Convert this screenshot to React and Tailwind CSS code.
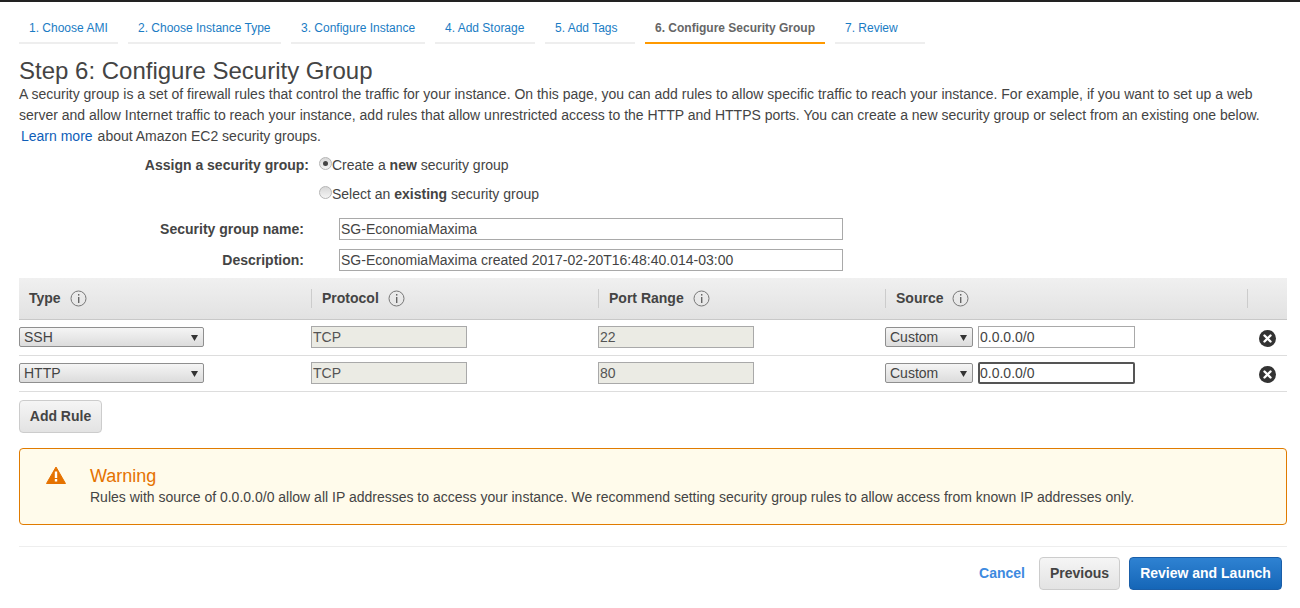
import React from 'react';

const steps = [
  { label: '1. Choose AMI', width: 'w-[99px]' },
  { label: '2. Choose Instance Type', width: 'w-[153px]' },
  { label: '3. Configure Instance', width: 'w-[134px]' },
  { label: '4. Add Storage', width: 'w-[100px]' },
  { label: '5. Add Tags', width: 'w-[90px]' },
  { label: '6. Configure Security Group', width: 'w-[180px]', active: true },
  { label: '7. Review', width: 'w-[90px]' },
];

const columns = [
  { label: 'Type', width: 'w-[292px]' },
  { label: 'Protocol', width: 'w-[287px]' },
  { label: 'Port Range', width: 'w-[287px]' },
  { label: 'Source', width: 'w-[362px]' },
];

const rules = [
  { type: 'SSH', port: '22' },
  { type: 'HTTP', port: '80', focused: true },
];

const InfoIcon = () => (
  <svg width="17" height="17" viewBox="0 0 17 17" className="shrink-0">
    <circle cx="8.5" cy="8.5" r="7.5" fill="none" stroke="#777" strokeWidth="1" />
    <rect x="8" y="4" width="1.4" height="1.6" fill="#666" />
    <rect x="8" y="7" width="1.4" height="6" fill="#666" />
  </svg>
);

const Arrow = () => (
  <svg width="7" height="6" viewBox="0 0 7 6" className="shrink-0">
    <path d="M0 0H7L3.5 6Z" fill="#333" />
  </svg>
);

const RemoveIcon = () => (
  <svg width="17" height="17" viewBox="0 0 17 17">
    <circle cx="8.5" cy="8.5" r="8.5" fill="#333" />
    <path d="M5.5 5.5L11.5 11.5M11.5 5.5L5.5 11.5" stroke="#fff" strokeWidth="2.4" strokeLinecap="round" />
  </svg>
);

const WarningIcon = () => (
  <svg width="20" height="18" viewBox="0 0 20 18">
    <path d="M10 1L19.5 17.5H0.5Z" fill="#e57200" stroke="#e57200" strokeWidth="1" strokeLinejoin="round" />
    <rect x="8.8" y="5.5" width="2.4" height="6.5" fill="#fff" />
    <rect x="8.8" y="13" width="2.4" height="2.5" fill="#fff" />
  </svg>
);

const Radio = ({ checked }) => (
  <span className="w-[13px] h-[13px] rounded-full border border-[#b5b5b5] bg-gradient-to-b from-[#d8d8d8] to-[#f4f4f4] flex items-center justify-center shrink-0 mb-[3px]">
    {checked && <span className="w-[5px] h-[5px] rounded-full bg-[#444]"></span>}
  </span>
);

const SelectBox = ({ value, className }) => (
  <div className={`h-[20px] pt-[2px] border border-[#8f8f8f] rounded-[2px] bg-gradient-to-b from-[#f5f5f5] to-[#dcdcdc] flex items-center justify-between pl-[4px] pr-[5px] text-[14px] text-[#444] ${className}`}>
    <span>{value}</span>
    <Arrow />
  </div>
);

const ReadonlyBox = ({ value }) => (
  <div className="w-[156px] h-[22px] pt-[2px] border border-[#a9a9a9] bg-[#ebebe4] flex items-center pl-[1px] text-[14px] text-[#545454]">
    {value}
  </div>
);

const TextBox = ({ value, className }) => (
  <div className={`h-[22px] bg-white flex items-center text-[14px] text-[#444] ${className}`}>
    {value}
  </div>
);

export default function App() {
  return (
    <div className="w-[1300px] h-[608px] bg-white overflow-hidden text-[#444] font-['Liberation_Sans',Arial,sans-serif]">
      <div className="h-[2px] bg-[#222]"></div>

      <div className="flex gap-[10px] pl-[19px] pt-[16px]">
        {steps.map((step) => (
          <div
            key={step.label}
            className={`${step.width} h-[26px] pl-[10px] border-b-2 text-[12px] leading-[20px] whitespace-nowrap ${
              step.active ? 'border-[#f90] font-bold text-[#666]' : 'border-[#eee] text-[#1a7cc4]'
            }`}
          >
            {step.label}
          </div>
        ))}
      </div>

      <div className="pl-[19px] pr-[13px]">
        <h1 className="mt-[12px] text-[24px] leading-[30px] text-[#444]">Step 6: Configure Security Group</h1>
        <p className="text-[14px] leading-[21px] text-[#444] mt-[-2px]">
          A security group is a set of firewall rules that control the traffic for your instance. On this page, you can add rules to allow specific traffic to reach your instance. For example, if you want to set up a web
          <br />
          server and allow Internet traffic to reach your instance, add rules that allow unrestricted access to the HTTP and HTTPS ports. You can create a new security group or select from an existing one below.
          <br />
          <span className="text-[#0f5eb8] ml-[2px] mr-[5px]">Learn more</span>about Amazon EC2 security groups.
        </p>

        <div className="mt-[6px] text-[14px]">
          <div className="flex items-center h-[24px]">
            <div className="w-[290px] text-right font-bold">Assign a security group:</div>
            <div className="flex items-center ml-[10px]">
              <Radio checked />
              <span>Create a <b>new</b> security group</span>
            </div>
          </div>
          <div className="flex items-center h-[24px] mt-[5px]">
            <div className="w-[290px]"></div>
            <div className="flex items-center ml-[10px]">
              <Radio />
              <span>Select an <b>existing</b> security group</span>
            </div>
          </div>
          <div className="flex items-center mt-[12px] h-[22px]">
            <div className="w-[285px] text-right font-bold">Security group name:</div>
            <TextBox value="SG-EconomiaMaxima" className="border border-[#a9a9a9] w-[504px] ml-[35px] pl-[1px]" />
          </div>
          <div className="flex items-center mt-[9px] h-[22px]">
            <div className="w-[285px] text-right font-bold">Description:</div>
            <TextBox value="SG-EconomiaMaxima created 2017-02-20T16:48:40.014-03:00" className="border border-[#a9a9a9] w-[504px] ml-[35px] pl-[1px]" />
          </div>
        </div>

        <div className="mt-[7px]">
          <div className="flex items-center h-[42px] bg-gradient-to-b from-[#f0f0f0] to-[#e2e2e2] border-b border-[#c8c8c8]">
            {columns.map((col, i) => (
              <div
                key={col.label}
                className={`${col.width} h-[19px] flex items-center gap-[9px] text-[14px] font-bold ${i === 0 ? 'pl-[10px]' : 'pl-[10px] border-l border-[#ccc]'}`}
              >
                {col.label}
                <InfoIcon />
              </div>
            ))}
            <div className="h-[19px] border-l border-[#ccc]"></div>
          </div>

          {rules.map((rule) => (
            <div key={rule.type} className="flex items-center h-[36px] pb-[2px] border-b border-[#ddd]">
              <div className="w-[292px]">
                <SelectBox value={rule.type} className="w-[185px]" />
              </div>
              <div className="w-[287px]">
                <ReadonlyBox value="TCP" />
              </div>
              <div className="w-[287px]">
                <ReadonlyBox value={rule.port} />
              </div>
              <div className="flex items-center gap-[5px]">
                <SelectBox value="Custom" className="w-[88px]" />
                <TextBox
                  value="0.0.0.0/0"
                  className={`w-[157px] pt-[2px] ${rule.focused ? 'border-2 border-[#555] rounded-[2px]' : 'border border-[#a9a9a9] pl-[1px]'}`}
                />
              </div>
              <div className="ml-[124px] mt-[3px]">
                <RemoveIcon />
              </div>
            </div>
          ))}
        </div>

        <button className="block mt-[8px] w-[83px] h-[33px] rounded-[4px] border border-[#ccc] bg-gradient-to-b from-[#f5f5f5] to-[#e3e3e3] text-[14px] font-bold text-[#444]">
          Add Rule
        </button>

        <div className="mt-[15px] h-[77px] flex rounded-[4px] border border-[#e07b00] bg-[#fffbeb]">
          <div className="w-[70px] pl-[26px] pt-[17px]">
            <WarningIcon />
          </div>
          <div className="pt-[16px]">
            <div className="text-[18px] leading-[22px] text-[#e57200]">Warning</div>
            <div className="text-[14px] leading-[20px] text-[#444]">
              Rules with source of 0.0.0.0/0 allow all IP addresses to access your instance. We recommend setting security group rules to allow access from known IP addresses only.
            </div>
          </div>
        </div>

        <div className="mt-[21px] border-t border-[#eee] pt-[10px] flex items-center justify-end pr-[5px]">
          <span className="text-[14px] font-bold text-[#3d8ae0] mr-[14px]">Cancel</span>
          <button className="w-[81px] h-[33px] mr-[9px] rounded-[4px] border border-[#ccc] bg-gradient-to-b from-[#f5f5f5] to-[#e3e3e3] text-[14px] font-bold text-[#444]">
            Previous
          </button>
          <button className="w-[153px] h-[33px] rounded-[4px] border border-[#1a5ea8] bg-gradient-to-b from-[#2e82d2] to-[#1566b7] text-[14px] font-bold text-white">
            Review and Launch
          </button>
        </div>
      </div>
    </div>
  );
}
